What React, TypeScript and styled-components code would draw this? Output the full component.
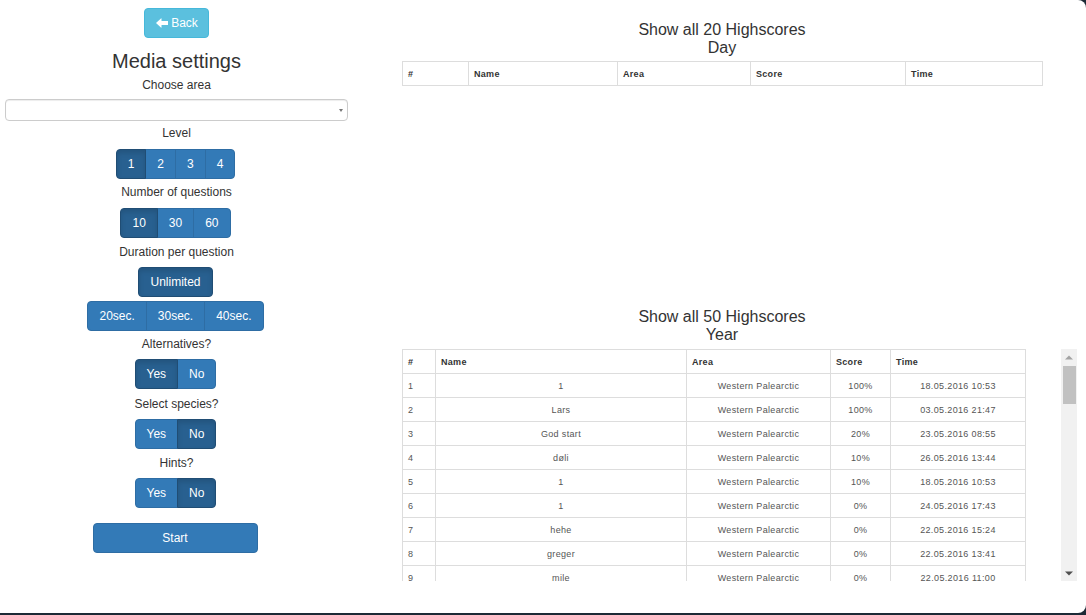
import React from "react";
import styled, { createGlobalStyle } from "styled-components";

const Global = createGlobalStyle`
  html, body { margin: 0; padding: 0; background: #1c2a36; }
  body { font-family: "Liberation Sans", Arial, sans-serif; color: #333; }
  * { box-sizing: border-box; }
`;

const Frame = styled.div`
  width: 1086px;
  height: 613px;
  background: #fff;
  border-radius: 0 8px 8px 0;
  display: flex;
  overflow: hidden;
`;

const Sidebar = styled.div`
  width: 353px;
  flex: none;
  padding: 8px 5px 0;
  display: flex;
  flex-direction: column;
  align-items: center;
`;

const BackButton = styled.button`
  display: inline-flex;
  align-items: center;
  gap: 3px;
  height: 30px;
  padding: 0 10px 0 11px;
  font: 12px "Liberation Sans", Arial, sans-serif;
  color: #fff;
  background: #5bc0de;
  border: 1px solid #46b8da;
  border-radius: 4px;
`;

const Heading = styled.h1`
  font-size: 20px;
  font-weight: normal;
  line-height: 22px;
  margin: 12px 0 0;
  color: #333;
`;

const Label = styled.div<{ $mt?: number; $mb?: number }>`
  font-size: 12px;
  line-height: 18px;
  color: #333;
  margin-top: ${(p) => p.$mt ?? 5}px;
  margin-bottom: ${(p) => p.$mb ?? 6}px;
`;

const SelectWrap = styled.div`
  position: relative;
  align-self: stretch;
  height: 22px;
`;

const Select = styled.select`
  width: 100%;
  height: 22px;
  border: 1px solid #ccc;
  border-radius: 4px;
  background: #fff;
  box-shadow: inset 0 1px 1px rgba(0, 0, 0, 0.075);
  appearance: none;
  -webkit-appearance: none;
  font: 12px "Liberation Sans", Arial, sans-serif;
`;

const Caret = styled.span`
  position: absolute;
  right: 5px;
  top: 10px;
  width: 0;
  height: 0;
  border-left: 2px solid transparent;
  border-right: 2px solid transparent;
  border-top: 3px solid #777;
  pointer-events: none;
`;

const BtnGroup = styled.div<{ $mt?: number }>`
  display: inline-flex;
  margin-top: ${(p) => p.$mt ?? 0}px;
  margin-right: 2px;
`;

const Btn = styled.button<{ $active?: boolean }>`
  height: 30px;
  padding: 0 11px;
  font: 12px/28px "Liberation Sans", Arial, sans-serif;
  color: #fff;
  background: ${(p) => (p.$active ? "#286090" : "#337ab7")};
  border: 1px solid ${(p) => (p.$active ? "#204d74" : "#2e6da4")};
  box-shadow: ${(p) => (p.$active ? "inset 0 3px 5px rgba(0,0,0,0.125)" : "none")};
  border-radius: 0;
  margin-left: -1px;
  position: relative;
  z-index: ${(p) => (p.$active ? 2 : 1)};
  &:first-child { margin-left: 0; border-radius: 4px 0 0 4px; }
  &:last-child { border-radius: 0 4px 4px 0; }
  &:only-child { border-radius: 4px; }
`;

const StartButton = styled.button`
  width: 165px;
  height: 30px;
  margin: 15px 3px 0 0;
  font: 12px "Liberation Sans", Arial, sans-serif;
  color: #fff;
  background: #337ab7;
  border: 1px solid #2e6da4;
  border-radius: 4px;
`;

const Main = styled.div`
  flex: 1;
  padding: 21px 0 0 49px;
  display: flex;
  flex-direction: column;
`;

const Section = styled.section<{ $minH?: number }>`
  min-height: ${(p) => p.$minH ?? 0}px;
`;

const Title = styled.h4<{ $mb?: number }>`
  width: 640px;
  margin: 0 0 ${(p) => p.$mb ?? 5}px;
  font-size: 16px;
  font-weight: normal;
  line-height: 1.1;
  text-align: center;
  color: #333;
`;

const Table = styled.table<{ $w: number }>`
  width: ${(p) => p.$w}px;
  border-collapse: collapse;
  table-layout: fixed;
`;

const Th = styled.th<{ $w: number }>`
  width: ${(p) => p.$w}px;
  height: 24px;
  padding: 0 5px;
  border: 1px solid #ddd;
  font: bold 9px "Liberation Sans", Arial, sans-serif;
  letter-spacing: 0.3px;
  color: #333;
  text-align: left;
`;

const Td = styled.td<{ $left?: boolean }>`
  height: 24px;
  padding: 0 5px;
  border: 1px solid #ddd;
  font: 9px "Liberation Sans", Arial, sans-serif;
  letter-spacing: 0.35px;
  color: #555;
  text-align: ${(p) => (p.$left ? "left" : "center")};
  white-space: nowrap;
`;

const ScrollBox = styled.div`
  width: 675px;
  height: 232px;
  display: flex;
`;

const Viewport = styled.div`
  flex: 1;
  overflow: hidden;
`;

const ScrollTrack = styled.div`
  width: 16px;
  flex: none;
  background: #f1f1f1;
  display: flex;
  flex-direction: column;
`;

const ScrollArrow = styled.div`
  height: 16px;
  display: flex;
  align-items: center;
  justify-content: center;
`;

const ScrollThumb = styled.div<{ $h: number }>`
  height: ${(p) => p.$h}px;
  margin: 1px 1px 0 2px;
  background: #c1c1c1;
`;

const ScrollRest = styled.div`
  flex: 1;
`;

const ArrowLeft = () => (
  <svg width="12" height="10" viewBox="0 0 12 10" aria-hidden="true">
    <path d="M0 5 L5.2 0.2 L5.5 0.6 L5.5 3 L12 3 L12 7 L5.5 7 L5.5 9.4 L5.2 9.8 Z" fill="#fff" />
  </svg>
);

const Tri = ({ up, color }: { up?: boolean; color: string }) => (
  <svg width="8" height="5" viewBox="0 0 8 5" aria-hidden="true">
    <path d={up ? "M0 4.5 L4 0.5 L8 4.5 Z" : "M0 0.5 L8 0.5 L4 4.5 Z"} fill={color} />
  </svg>
);

type Row = [string, string, string, string];

const knownRows: Row[] = [
  ["1", "Western Palearctic", "100%", "18.05.2016 10:53"],
  ["Lars", "Western Palearctic", "100%", "03.05.2016 21:47"],
  ["God start", "Western Palearctic", "20%", "23.05.2016 08:55"],
  ["døli", "Western Palearctic", "10%", "26.05.2016 13:44"],
  ["1", "Western Palearctic", "10%", "18.05.2016 10:53"],
  ["1", "Western Palearctic", "0%", "24.05.2016 17:43"],
  ["hehe", "Western Palearctic", "0%", "22.05.2016 15:24"],
  ["greger", "Western Palearctic", "0%", "22.05.2016 13:41"],
  ["mile", "Western Palearctic", "0%", "22.05.2016 11:00"],
];

const fillerNames = ["test", "Kari", "abc", "Ola", "fugl", "per", "hei", "x", "Nina", "aaa"];
const yearRows: Row[] = [
  ...knownRows,
  ...Array.from({ length: 41 }, (_, i): Row => {
    const day = 21 - Math.floor(i / 3);
    const h = 20 - (i % 12);
    return [
      fillerNames[i % fillerNames.length],
      "Western Palearctic",
      "0%",
      `${String(Math.max(day, 1)).padStart(2, "0")}.05.2016 ${String(h).padStart(2, "0")}:${String((i * 7) % 60).padStart(2, "0")}`,
    ];
  }),
];

const dayCols: [string, number][] = [
  ["#", 66],
  ["Name", 149],
  ["Area", 133],
  ["Score", 155],
  ["Time", 137],
];

const yearCols: [string, number][] = [
  ["#", 33],
  ["Name", 251],
  ["Area", 144],
  ["Score", 60],
  ["Time", 135],
];

const VIEW_H = 232;
const CONTENT_H = 24 * (yearRows.length + 1) + 1;
const thumbH = Math.round(((VIEW_H - 32) * VIEW_H) / CONTENT_H);

export default function App() {
  return (
    <>
      <Global />
      <Frame>
        <Sidebar>
          <BackButton>
            <ArrowLeft />
            Back
          </BackButton>
          <Heading>Media settings</Heading>
          <Label $mt={4} $mb={5}>Choose area</Label>
          <SelectWrap>
            <Select defaultValue="">
              <option value=""></option>
            </Select>
            <Caret />
          </SelectWrap>
          <Label $mt={3} $mb={7}>Level</Label>
          <BtnGroup>
            <Btn $active>1</Btn>
            <Btn>2</Btn>
            <Btn>3</Btn>
            <Btn>4</Btn>
          </BtnGroup>
          <Label $mt={4} $mb={7}>Number of questions</Label>
          <BtnGroup>
            <Btn $active>10</Btn>
            <Btn>30</Btn>
            <Btn>60</Btn>
          </BtnGroup>
          <Label>Duration per question</Label>
          <BtnGroup>
            <Btn $active>Unlimited</Btn>
          </BtnGroup>
          <BtnGroup $mt={4}>
            <Btn>20sec.</Btn>
            <Btn>30sec.</Btn>
            <Btn>40sec.</Btn>
          </BtnGroup>
          <Label $mt={4}>Alternatives?</Label>
          <BtnGroup>
            <Btn $active>Yes</Btn>
            <Btn>No</Btn>
          </BtnGroup>
          <Label $mt={6}>Select species?</Label>
          <BtnGroup>
            <Btn>Yes</Btn>
            <Btn $active>No</Btn>
          </BtnGroup>
          <Label>Hints?</Label>
          <BtnGroup>
            <Btn>Yes</Btn>
            <Btn $active>No</Btn>
          </BtnGroup>
          <StartButton>Start</StartButton>
        </Sidebar>
        <Main>
          <Section $minH={287}>
            <Title>
              Show all 20 Highscores
              <br />
              Day
            </Title>
            <Table $w={640}>
              <thead>
                <tr>
                  {dayCols.map(([n, w]) => (
                    <Th key={n} $w={w}>{n}</Th>
                  ))}
                </tr>
              </thead>
            </Table>
          </Section>
          <Section>
            <Title $mb={6}>
              Show all 50 Highscores
              <br />
              Year
            </Title>
            <ScrollBox>
              <Viewport>
                <Table $w={623}>
                  <thead>
                    <tr>
                      {yearCols.map(([n, w]) => (
                        <Th key={n} $w={w}>{n}</Th>
                      ))}
                    </tr>
                  </thead>
                  <tbody>
                    {yearRows.map((r, i) => (
                      <tr key={i}>
                        <Td $left>{i + 1}</Td>
                        <Td>{r[0]}</Td>
                        <Td>{r[1]}</Td>
                        <Td>{r[2]}</Td>
                        <Td>{r[3]}</Td>
                      </tr>
                    ))}
                  </tbody>
                </Table>
              </Viewport>
              <ScrollTrack>
                <ScrollArrow>
                  <Tri up color="#a3a3a3" />
                </ScrollArrow>
                <ScrollThumb $h={thumbH} />
                <ScrollRest />
                <ScrollArrow>
                  <Tri color="#505050" />
                </ScrollArrow>
              </ScrollTrack>
            </ScrollBox>
          </Section>
        </Main>
      </Frame>
    </>
  );
}
